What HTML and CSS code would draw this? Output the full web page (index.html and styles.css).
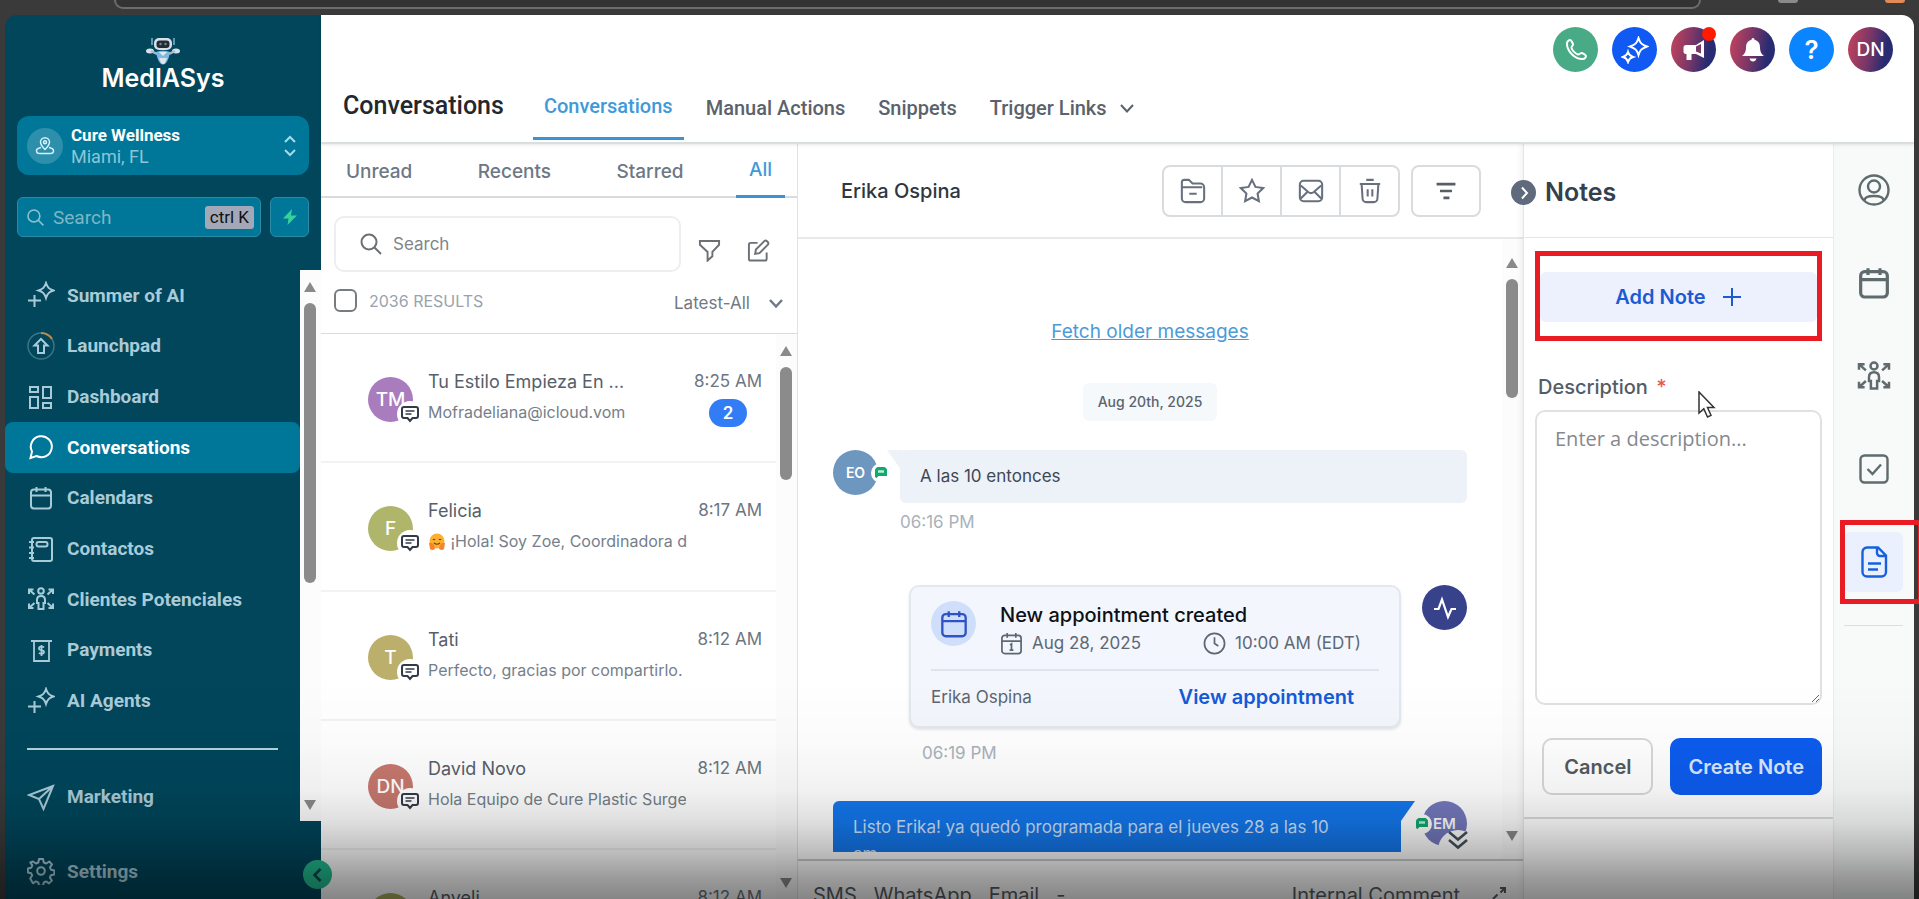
FILE: index.html
```html
<!DOCTYPE html>
<html lang="en">
<head>
<meta charset="utf-8">
<meta name="viewport" content="width=device-width, initial-scale=1">
<title>Conversations</title>
<link rel="stylesheet" href="styles.css">
</head>
<body>
<svg class="defs" aria-hidden="true">
  <symbol id="i-search" viewBox="0 0 24 24"><circle cx="10" cy="10" r="7.5"/><path d="M15.5 15.5 22 22"/></symbol>
  <symbol id="i-sparkle" viewBox="0 0 28 28"><path d="M19 2c1.500 4.500 3 6 7.500 7.500-4.500 1.500-6 3-7.500 7.500-1.500-4.500-3-6-7.500-7.500C16 8 17.500 6.500 19 2zM7.500 14v12M1 19.500h13"/></symbol>
  <symbol id="i-calendar" viewBox="0 0 24 24"><rect x="2" y="3.500" width="20" height="19" rx="3"/><path d="M2 9.500h20M7.500 1v5M16.500 1v5"/></symbol>
  <symbol id="i-people" viewBox="0 0 28 24"><circle cx="14" cy="4" r="2.800"/><path d="M14 9c-3 0-4 1.500-4 4v3h1.500v6h5v-6H18v-3c0-2.500-1-4-4-4zM2 7V2.500h4.500M2 2.500l5.500 5M26 7V2.500h-4.500M26 2.500l-5.500 5M2 16.500V21h4.500M2 21l5.500-5M26 16.500V21h-4.500M26 21l-5.500-5"/></symbol>
  <symbol id="i-down" viewBox="0 0 16 16"><path d="M2 5l6 6.500L14 5"/></symbol>
  <symbol id="i-sms" viewBox="0 0 20 18"><path d="M4 2h12a2 2 0 0 1 2 2v7a2 2 0 0 1-2 2h-3.500L10 16l-2.500-3H4a2 2 0 0 1-2-2V4a2 2 0 0 1 2-2z"/><path d="M5.500 6h9M5.500 9h6" stroke-width="1.500"/></symbol>
  <symbol id="i-chat" viewBox="0 0 14 14"><path d="M1 1h12v9H4.500L1 13.500z" fill="#13a870"/><path d="M4 4.200h6v2.600H4z" fill="#b9f0d6"/></symbol>
</svg>

<div class="browser-bar"><span class="omnibox"></span><i class="bar-dot"></i><i class="bar-dot bar-dot-orange"></i></div>

<div class="app">
  <aside class="sidebar">
    <div class="brand">
      <svg class="robot" viewBox="0 0 34 28" aria-hidden="true">
        <path d="M6 1v7M28 1v7" stroke="#7fb4d0" stroke-width="1.500"/>
        <ellipse cx="4" cy="14" rx="4" ry="2.500" fill="#d5e2ec"/><ellipse cx="30" cy="14" rx="4" ry="2.500" fill="#d5e2ec"/>
        <path d="M5 14l6 3M29 14l-6 3" stroke="#a9bccb" stroke-width="2.500"/>
        <rect x="8" y="1" width="18" height="12" rx="5" fill="#d7e0e8"/><rect x="10.500" y="3.500" width="13" height="7.500" rx="3" fill="#252b33"/>
        <circle cx="14.500" cy="7" r="1.200" fill="#77889a"/><circle cx="19.500" cy="7" r="1.200" fill="#77889a"/>
        <path d="M10 15q7-3 14 0-1 7-4 11-3 3-6 0-3-4-4-11z" fill="#7eb8e4"/><path d="M13 21h8l-2 5q-2 2-4 0z" fill="#dfe5ea"/><path d="M13 15l4 4 4-4z" fill="#d9edf9"/>
      </svg>
      <div class="brand-name">MedIASys</div>
    </div>

    <button class="account" type="button">
      <span class="account-pin"><svg viewBox="0 0 20 20"><path d="M10 13.500C7.500 11 5.500 8.800 5.500 6.300a4.500 4.500 0 0 1 9 0c0 2.500-2 4.700-4.500 7.200z"/><circle cx="10" cy="6.300" r="1.500"/><path d="M6 11.500c-3 .6-4.500 2-4.500 3.200C1.500 16.500 3 17.500 5 17.500h10c2 0 3.500-1 3.500-2.800 0-1.200-1.500-2.600-4.500-3.200"/></svg></span>
      <span class="account-text"><b>Cure Wellness</b><span>Miami, FL</span></span>
      <svg class="account-arrows" viewBox="0 0 14 22"><path d="M2 7l5-5 5 5M2 15l5 5 5-5"/></svg>
    </button>

    <div class="side-search">
      <label class="side-search-box">
        <svg viewBox="0 0 24 24"><use href="#i-search"/></svg>
        <input type="text" placeholder="Search" aria-label="Search menu">
        <kbd>ctrl K</kbd>
      </label>
      <button class="bolt" type="button" aria-label="Quick actions"><svg viewBox="0 0 16 18"><path d="M10 1 1 10.500h5.500L5.500 17 15 7.500H9z"/></svg></button>
    </div>

    <div class="side-scroll">
      <nav class="menu">
        <div class="menu-main">
          <a href="#"><svg viewBox="0 0 28 28"><use href="#i-sparkle"/></svg>Summer of AI</a>
          <a href="#"><svg viewBox="0 0 28 28"><circle cx="14" cy="14" r="13" stroke="#3d7485" stroke-width="1.500"/><path d="M14 1a13 13 0 0 1 11 6" stroke="#c08a4a"/><path d="M14 7l6.500 6.500H17V21h-6v-7.500H7.500z"/></svg>Launchpad</a>
          <a href="#"><svg viewBox="0 0 28 28"><path d="M3 4h8v5H3zM16 4h8v11h-8zM3 14h8v11H3zM16 20h8v5h-8z"/></svg>Dashboard</a>
          <a href="#" class="active"><svg viewBox="0 0 28 28"><path d="M3.500 25l1.500-6.500A10.500 10.500 0 1 1 9.500 23z"/></svg>Conversations</a>
          <a href="#"><svg class="small" viewBox="0 0 24 24"><use href="#i-calendar"/></svg>Calendars</a>
          <a href="#"><svg viewBox="0 0 28 28"><rect x="5" y="3" width="20" height="23" rx="2"/><rect x="9.500" y="7" width="11" height="4.500" rx="2"/><path d="M2 7h5M2 12.500h5M2 18h5M2 23h5"/></svg>Contactos</a>
          <a href="#"><svg viewBox="0 0 28 24"><use href="#i-people"/></svg>Clientes Potenciales</a>
          <a href="#"><svg viewBox="0 0 28 28"><path d="M4 5h21M7 5v20h15V5M17 11.500c-1-1.200-5-1.300-5 .9 0 2.400 5 1.200 5 3.600 0 2.200-4 2.200-5 .8M14.500 9v11" stroke-width="1.800"/></svg>Payments</a>
          <a href="#"><svg viewBox="0 0 28 28"><use href="#i-sparkle"/></svg>AI Agents</a>
        </div>
        <hr>
        <a href="#"><svg viewBox="0 0 28 28"><path d="M26 3 2 12l10 4 4.500 10zM12 16 26 3"/></svg>Marketing</a>
      </nav>
      <div class="scrollbar"><i class="up"></i><i class="thumb thumb-side"></i><i class="down"></i></div>
    </div>
    <div class="side-foot">
      <a href="#"><svg viewBox="0 0 28 28"><circle cx="14" cy="14" r="3.800"/><path d="M12 2h4l.8 3.500 2.400 1 3-2 2.800 2.900-2 3 1 2.300 3.400.8v4l-3.500.7-1 2.400 2 3-2.900 2.800-3-2-2.200 1-.8 3.400h-4l-.7-3.500-2.400-1-3 2L3.200 21.500l2-3-1-2.200-3.300-.8v-4l3.400-.8 1-2.300-2-3L6 4.500l3 2 2.300-1z" stroke-linejoin="round"/></svg>Settings</a>
    </div>
    <button class="collapse" type="button" aria-label="Collapse menu"><svg viewBox="0 0 16 16"><path d="M10.500 2 4.500 8l6 6"/></svg></button>
  </aside>

  <div class="workspace">
    <header class="top">
      <div class="top-icons">
        <button class="round green" type="button" aria-label="Phone"><svg viewBox="0 0 24 24"><path d="M3 5c0-1.500 2-3 3-3 1.200 0 3 3.500 3 4.500S7 9 7.500 10c1 2.500 4 5.500 6.500 6.500 1 .4 2.500-1.500 3.500-1.500s4.500 1.800 4.500 3-1.500 3-3 3C11 21.500 2.500 13 3 5z"/></svg></button>
        <button class="round blue" type="button" aria-label="AI"><svg class="wide" viewBox="0 0 28 28"><path d="M17.500 2c1.500 5 3 6.500 8.500 8.500-5.500 2-7 3.500-8.500 8.500-1.500-5-3-6.500-8.500-8.500C14.500 8.500 16 7 17.500 2zM7 16c.9 3 1.800 4 5 5-3.200 1-4.100 2-5 5-.9-3-1.800-4-5-5 3.200-1 4.100-2 5-5z"/></svg></button>
        <button class="round mix" type="button" aria-label="Announcements"><svg viewBox="0 0 24 24"><path d="M22 2v18l-8-4H9.500v6h-5v-6H4a2.500 2.500 0 0 1-2.500-2.500v-4A2.500 2.500 0 0 1 4 7h10z" fill="#fff" stroke="none"/><path d="M19 6v9.500l-5-2V8.500z" fill="#7a3a66" stroke="none"/></svg><i class="dot"></i></button>
        <button class="round mix" type="button" aria-label="Notifications"><svg viewBox="0 0 24 24"><path d="M12 0c1 0 1.500.8 1.500 1.700C17 2.500 19 5 19 9c0 5 1.500 7 4 9H1c2.500-2 4-4 4-9 0-4 2-6.500 5.500-7.300C10.500.8 11 0 12 0zM8.500 20.500h7c-.5 2-1.800 3-3.500 3s-3-1-3.500-3z" fill="#fff" stroke="none"/></svg></button>
        <button class="round sky" type="button">?</button>
        <button class="round mix initials" type="button">DN</button>
      </div>
      <div class="top-nav">
        <h1>Conversations</h1>
        <nav class="tabs">
          <a href="#" class="on">Conversations</a>
          <a href="#">Manual Actions</a>
          <a href="#">Snippets</a>
          <a href="#">Trigger Links <svg viewBox="0 0 16 16"><use href="#i-down"/></svg></a>
        </nav>
      </div>
    </header>

    <div class="columns">
      <section class="inbox">
        <nav class="inbox-tabs"><a href="#">Unread</a><a href="#">Recents</a><a href="#">Starred</a><a href="#" class="on">All</a></nav>
        <div class="inbox-tools">
          <label class="inbox-search"><svg viewBox="0 0 24 24"><use href="#i-search"/></svg><input type="text" placeholder="Search" aria-label="Search conversations"></label>
          <button type="button" aria-label="Filter"><svg viewBox="0 0 24 24"><path d="M2 2h20v4l-7 7.500V18l-5 4.500v-9L2 6z"/></svg></button>
          <button type="button" aria-label="Compose"><svg viewBox="0 0 24 24"><path d="M11 4H4a2 2 0 0 0-2 2v14.500a2 2 0 0 0 2 2h14.500a2 2 0 0 0 2-2V14M8.500 15.500l.8-4.500 9-9c1.500-1.200 5 1.800 3.700 3.700l-9 9z"/></svg></button>
        </div>
        <div class="inbox-sort">
          <label><input type="checkbox">2036 RESULTS</label>
          <span class="sort"><select aria-label="Sort"><option>Latest-All</option></select><svg viewBox="0 0 16 16"><use href="#i-down"/></svg></span>
        </div>
        <div class="inbox-scroll">
          <ul class="threads">
            <li><span class="avatar violet">TM<i><svg viewBox="0 0 20 18"><use href="#i-sms"/></svg></i></span><div class="who"><b>Tu Estilo Empieza En ...</b><p>Mofradeliana@icloud.vom</p></div><div class="when">8:25 AM<span class="count">2</span></div></li>
            <li><span class="avatar olive">F<i><svg viewBox="0 0 20 18"><use href="#i-sms"/></svg></i></span><div class="who"><b>Felicia</b><p><svg class="hug" viewBox="0 0 18 18" role="img" aria-label="hugging face"><circle cx="9" cy="8" r="7.500" fill="#fbb12f"/><path d="M5 7q1-1.500 2 0M11 7q1-1.500 2 0M6 10q3 2.500 6 0" fill="none" stroke="#7a3c12" stroke-width="1.200"/><path d="M1 10q3-1 5 2l1 4q-3 2-5 0zM17 10q-3-1-5 2l-1 4q3 2 5 0z" fill="#f5842a"/></svg> ¡Hola! Soy Zoe, Coordinadora d</p></div><div class="when">8:17 AM</div></li>
            <li><span class="avatar sand">T<i><svg viewBox="0 0 20 18"><use href="#i-sms"/></svg></i></span><div class="who"><b>Tati</b><p>Perfecto, gracias por compartirlo.</p></div><div class="when">8:12 AM</div></li>
            <li><span class="avatar rose">DN<i><svg viewBox="0 0 20 18"><use href="#i-sms"/></svg></i></span><div class="who"><b>David Novo</b><p>Hola Equipo de Cure Plastic Surge</p></div><div class="when">8:12 AM</div></li>
            <li><span class="avatar moss">A</span><div class="who"><b>Anyeli</b></div><div class="when">8:12 AM</div></li>
          </ul>
          <div class="scrollbar"><i class="up"></i><i class="thumb thumb-inbox"></i><i class="down"></i></div>
        </div>
      </section>

      <main class="chat">
        <div class="chat-head">
          <h2>Erika Ospina</h2>
          <div class="group">
            <button type="button" aria-label="Archive"><svg viewBox="0 0 28 28"><path d="M2 9V4.500A2.500 2.500 0 0 1 4.500 2h5l4 4H22a4 4 0 0 1 4 4v12a4 4 0 0 1-4 4H6a4 4 0 0 1-4-4zM2 10h22M10 17h8"/></svg></button>
            <button type="button" aria-label="Star"><svg viewBox="0 0 28 28"><path d="M14 2l3.700 7.600 8.300 1.200-6 5.900 1.400 8.300-7.400-4-7.400 4L8 16.700l-6-5.900 8.300-1.200z"/></svg></button>
            <button type="button" aria-label="Mark unread"><svg viewBox="0 0 28 28"><rect x="2" y="3" width="24" height="22" rx="4"/><path d="M3 8l8 7q3 2.500 6 0l8-7M3 22l7-7M25 22l-7-7"/></svg></button>
            <button type="button" aria-label="Delete"><svg viewBox="0 0 28 28"><path d="M3 6.500h22M10 2h8M5 7l1 15a4 4 0 0 0 4 4h8a4 4 0 0 0 4-4l1-15M11.500 12v8M16.500 12v8"/></svg></button>
          </div>
          <button class="lines" type="button" aria-label="Filter messages"><svg viewBox="0 0 28 28"><path d="M3 6h22M7 14h14M11 22h7"/></svg></button>
        </div>
        <div class="chat-scroll">
          <div class="messages">
            <a class="older" href="#">Fetch older messages</a>
            <span class="day">Aug 20th, 2025</span>
            <div class="msg in">
              <span class="face steel">EO<svg class="chan" viewBox="0 0 14 14"><use href="#i-chat"/></svg></span>
              <div class="bubble">A las 10 entonces</div>
            </div>
            <time class="stamp">06:16 PM</time>
            <div class="event">
              <article class="appt">
                <div class="appt-top">
                  <span class="appt-icon"><svg viewBox="0 0 24 24"><use href="#i-calendar"/></svg></span>
                  <div class="appt-info">
                    <h3>New appointment created</h3>
                    <div class="appt-meta">
                      <span><svg viewBox="0 0 24 24"><use href="#i-calendar"/><path d="M10.500 13.500l1.500-1v6.500M10 19h4" stroke-width="1.800"/></svg>Aug 28, 2025</span>
                      <span><svg viewBox="0 0 24 24"><circle cx="12" cy="12" r="10.500"/><path d="M12 5.500V12l4 2.500"/></svg>10:00 AM (EDT)</span>
                    </div>
                  </div>
                </div>
                <div class="appt-foot"><span>Erika Ospina</span><a href="#">View appointment</a></div>
              </article>
              <span class="pulse"><svg viewBox="0 0 24 24"><path d="M1 13h4.500L9 3.500 15 21l3.500-8H23"/></svg></span>
            </div>
            <time class="stamp stamp-event">06:19 PM</time>
            <div class="msg out">
              <div class="bubble">Listo Erika! ya quedó programada para el jueves 28 a las 10 am</div>
              <span class="face indigo"><button class="jump" type="button" aria-label="Jump to latest"><svg viewBox="0 0 20 20"><path d="M1 2l9 7.500L19 2M1 10l9 7.500L19 10"/></svg></button><span class="face-name">EM</span><svg class="chan" viewBox="0 0 14 14"><use href="#i-chat"/></svg></span>
            </div>
          </div>
          <div class="scrollbar"><i class="up"></i><i class="thumb thumb-chat"></i><i class="down"></i></div>
        </div>
        <div class="composer"><a href="#">SMS</a><a href="#">WhatsApp</a><a href="#">Email</a><span>-</span><a href="#" class="internal">Internal Comment</a><svg viewBox="0 0 14 14"><path d="M8 2h5v5M13 2 8.500 6.500M1 13l4.500-4.500"/></svg></div>
      </main>

      <section class="notes">
        <button class="fold" type="button" aria-label="Close notes"><svg viewBox="0 0 16 16"><path d="M6 2.500 11 8l-5 5.500"/></svg></button>
        <div class="notes-head"><h2>Notes</h2></div>
        <div class="notes-body">
          <div class="add-wrap"><button class="add" type="button">Add Note <svg viewBox="0 0 20 20"><path d="M10 1v18M1 10h18"/></svg></button></div>
          <label class="desc" for="desc">Description <em>*</em></label>
          <textarea id="desc" placeholder="Enter a description..."></textarea>
          <div class="actions"><button type="button">Cancel</button><button type="button" class="primary">Create Note</button></div>
          <svg class="pointer" viewBox="0 0 18 28"><path d="M1 1v21l4.800-4.300L9.500 26l3.500-1.700-3.500-7.800H16z"/></svg>
        </div>
      </section>

      <aside class="rail">
        <button type="button" aria-label="Contact"><svg viewBox="0 0 32 32"><circle cx="16" cy="16" r="14.500"/><circle cx="16" cy="12.500" r="6"/><path d="M6.500 26.500c0-3 4-4.500 9.500-4.500s9.500 1.500 9.500 4.500"/></svg></button>
        <button type="button" aria-label="Appointments"><svg viewBox="0 0 24 24"><use href="#i-calendar"/></svg></button>
        <button type="button" aria-label="Opportunities"><svg class="wide" viewBox="0 0 28 24"><use href="#i-people"/></svg></button>
        <button type="button" aria-label="Tasks"><svg viewBox="0 0 32 32"><rect x="2.500" y="2.500" width="27" height="27" rx="4"/><path d="M9.500 16l5 5 8.500-9.500"/></svg></button>
        <button type="button" aria-label="Notes" class="on"><svg viewBox="0 0 32 32"><path d="M9 1.500h11l8 8V26a4.500 4.500 0 0 1-4.500 4.500H9A4.500 4.500 0 0 1 4.500 26V6A4.500 4.500 0 0 1 9 1.500zM19 2v5a3 3 0 0 0 3 3h5.500M10 17.500h13M10 23.500h10"/></svg></button>
        <hr>
      </aside>
    </div>
  </div>
</div>
<div class="shade"></div>
</body>
</html>
```

FILE: styles.css
```css
* { box-sizing: border-box; }
body {
  margin: 0;
  height: 100vh;
  overflow: hidden;
  display: flex;
  flex-direction: column;
  background: #3a3a3b;
  font-family: Inter, "Liberation Sans", sans-serif;
  color: #5b6672;
}
button, input, textarea, select { font: inherit; color: inherit; margin: 0; }
button { border: 0; padding: 0; background: none; cursor: pointer; }
a { color: inherit; text-decoration: none; }
h1, h2, h3, p, ul { margin: 0; padding: 0; list-style: none; }
svg { fill: none; stroke: currentColor; stroke-width: 2; display: block; flex: none; }
.defs { position: absolute; width: 0; height: 0; }

.browser-bar { height: 15px; flex: none; display: flex; padding: 0 14px 0 114px; }
.omnibox { flex: 1; height: 9px; background: #333334; border: solid #6c6c6c; border-width: 0 2px 2px; border-radius: 0 0 18px 18px; }
.bar-dot { width: 20px; height: 3px; border-radius: 0 0 10px 10px; background: #8a8a8a; margin-left: 77px; }
.bar-dot-orange { background: #e08a55; margin-left: 87px; }

.app { flex: 1; min-height: 0; display: flex; margin: 0 5px; }

/* Sidebar */
.sidebar {
  position: relative;
  width: 316px;
  flex: none;
  display: flex;
  flex-direction: column;
  background: #01465b;
  border-radius: 12px 0 0 0;
  font-family: Roboto, "Liberation Sans", sans-serif;
}
.brand { height: 101px; padding-top: 22px; display: flex; flex-direction: column; align-items: center; }
.robot { width: 34px; height: 28px; stroke: none; }
.brand-name { font: 600 25px/26px Inter, sans-serif; color: #fff; }
.account {
  margin: 0 12px;
  height: 59px;
  display: flex;
  align-items: center;
  padding: 0 12px 0 10px;
  border-radius: 12px;
  background: #007799;
  text-align: left;
}
.account-pin { width: 36px; height: 36px; border-radius: 50%; background: #2e8fac; display: grid; place-items: center; color: #d5f3fa; }
.account-pin svg { width: 20px; height: 20px; stroke-width: 1.5; }
.account-text { flex: 1; margin-left: 8px; font-size: 18px; line-height: 21px; color: #8cc6d6; display: flex; flex-direction: column; }
.account-text b { color: #fff; font-size: 17px; font-weight: 700; }
.account-arrows { width: 14px; height: 22px; color: #a4dbe6; }
.side-search { display: flex; gap: 9px; margin: 22px 12px 0; }
.side-search-box, .bolt { height: 40px; background: #007799; border: 1px solid #2b8ba5; border-radius: 6px; }
.side-search-box { flex: 1; min-width: 0; display: flex; align-items: center; padding: 0 6px 0 8px; color: #8dc0cd; }
.side-search-box svg { width: 19px; height: 19px; }
.side-search-box input { flex: 1; min-width: 0; border: 0; background: none; padding: 0 8px; font-size: 19px; outline: 0; }
.side-search-box input::placeholder { color: #7eb6c5; }
.side-search-box kbd { font: 17px/23px Roboto, sans-serif; padding: 0 5px; border-radius: 3px; background: #a3a8b8; color: #111; }
.bolt { width: 39px; display: grid; place-items: center; }
.bolt svg { width: 16px; height: 18px; fill: #34d399; stroke: none; }
.side-scroll { flex: 1; min-height: 0; margin-top: 33px; display: flex; }
.menu { flex: 1; color: #a9cbd8; }
.menu-main { display: grid; grid-auto-rows: 1fr; height: 456px; }
.menu a, .side-foot a { display: flex; align-items: center; gap: 12px; padding-left: 22px; font-size: 19px; font-weight: 700; }
.menu svg, .side-foot svg { width: 28px; height: 28px; }
.menu svg.small { width: 24px; height: 24px; margin: 0 2px; }
.menu a.active { background: #007799; color: #fff; border-radius: 8px; }
.menu hr { height: 2px; margin: 22px 22px 21px; border: 0; background: #b3d3dd; }
.menu > a { height: 51px; }
.side-foot { height: 78px; padding-top: 36px; color: #a9cbd8; }
.collapse { position: absolute; right: -11px; bottom: 10px; width: 29px; height: 29px; border-radius: 50%; background: #22bd92; color: #0b4a4a; display: grid; place-items: center; z-index: 3; }
.collapse svg { width: 16px; height: 16px; stroke-width: 2.5; }

.scrollbar { width: 21px; flex: none; background: #fcfcfc; display: flex; flex-direction: column; align-items: center; padding: 12px 5px 11px 4px; }
.up, .down { border: 6px solid transparent; }
.up { border-top: 0; border-bottom: 10px solid #8a8a8a; }
.down { border-bottom: 0; border-top: 10px solid #8a8a8a; margin-top: auto; }
.thumb { width: 12px; border-radius: 6px; background: #8b8b8b; margin-top: 11px; }
.thumb-side { height: 280px; }
.thumb-inbox { height: 113px; }
.thumb-chat { height: 119px; }

/* Header */
.workspace { flex: 1; min-width: 0; display: flex; flex-direction: column; background: #fff; border-radius: 0 12px 0 0; }
.top {
  height: 129px;
  flex: none;
  display: flex;
  flex-direction: column;
  justify-content: space-between;
  border-bottom: 2px solid #d9dfe1;
  box-shadow: 0 1px 3px #0000001a;
  font-family: Roboto, "Liberation Sans", sans-serif;
  z-index: 1;
}
.top-icons { display: flex; justify-content: flex-end; gap: 14px; padding: 12px 21px 0 0; }
.round { position: relative; width: 45px; height: 45px; border-radius: 50%; color: #fff; display: grid; place-items: center; font: 600 26px Inter, sans-serif; }
.round svg { width: 24px; height: 24px; }
.round svg.wide { width: 28px; height: 28px; }
.green { background: #48ab86; }
.blue { background: #1059f2; }
.sky { background: #0b84ff; }
.mix { background: linear-gradient(100deg, #b8405f 10%, #7a3767 45%, #272b72 80%); }
.initials { font-size: 19px; font-weight: 500; }
.dot { position: absolute; right: 0; top: 0; width: 14px; height: 14px; border-radius: 50%; background: #ff1a00; }
.top-nav { display: flex; align-items: center; }
h1 { margin: 0 29px 6px 22px; font-size: 25px; font-weight: 500; line-height: 30px; color: #23272e; }
.tabs { display: flex; gap: 33px; font-size: 20px; font-weight: 500; color: #5b626b; }
.tabs a { display: flex; align-items: center; gap: 12px; height: 65px; }
.tabs a.on { color: #3f9ad9; padding: 0 11px; border-bottom: 3px solid #3a93d2; margin: 0 -11px 2px 0; }
.tabs svg { width: 16px; height: 16px; }

.columns { flex: 1; min-height: 0; display: flex; }

/* Inbox */
.inbox { width: 477px; flex: none; display: flex; flex-direction: column; border-right: 1px solid #dfe3e8; }
.inbox-tabs { height: 54px; flex: none; display: flex; justify-content: space-between; padding: 0 12px; border-bottom: 2px solid #d8dcdf; font-size: 19px; font-weight: 500; color: #6d7885; }
.inbox-tabs a { display: flex; align-items: center; padding: 0 13px; margin-bottom: -2px; }
.inbox-tabs a.on { color: #3f9ad9; border-bottom: 3px solid #3a93d2; }
.inbox-tools { display: flex; align-items: center; gap: 26px; padding: 18px 27px 0 13px; }
.inbox-search { flex: 1; min-width: 0; height: 56px; display: flex; align-items: center; gap: 10px; padding: 0 23px; margin-right: -9px; border: 2px solid #eceef0; border-radius: 10px; color: #6b7075; }
.inbox-search svg { width: 24px; height: 24px; }
.inbox-search input { flex: 1; min-width: 0; border: 0; padding: 0; outline: 0; background: none; font-size: 17px; }
.inbox-search input::placeholder { color: #80858a; }
.inbox-tools button { padding-top: 12px; color: #6b7075; }
.inbox-tools button svg { width: 23px; height: 23px; }
.inbox-sort { display: flex; align-items: center; justify-content: space-between; height: 62px; flex: none; padding: 0 13px; border-bottom: 1px solid #d9dde0; font-size: 16px; color: #9aa3ad; }
.inbox-sort label { display: flex; align-items: center; gap: 12px; margin-bottom: 4px; }
.inbox-sort input { appearance: none; width: 23px; height: 23px; border: 2px solid #777c81; border-radius: 6px; }
.sort { display: flex; align-items: center; gap: 18px; font-size: 17px; color: #717a83; }
.sort select { appearance: none; border: 0; background: none; padding: 0; }
.sort svg { width: 16px; height: 16px; stroke-width: 2.5; }
.inbox-scroll { flex: 1; min-height: 0; display: flex; }
.threads { flex: 1; min-width: 0; overflow: hidden; }
.threads li { display: flex; height: 129px; padding: 33px 14px 0 47px; border-bottom: 2px solid #f1f3f4; }
.avatar { position: relative; width: 45px; height: 45px; margin-top: 10px; flex: none; border-radius: 50%; display: grid; place-items: center; color: #fff; font-size: 19px; font-weight: 500; }
.avatar i { position: absolute; left: 29px; top: 24px; width: 26px; height: 26px; border-radius: 50%; background: #fff; color: #343b48; display: grid; place-items: center; }
.avatar i svg { width: 20px; height: 18px; }
.violet { background: #a97cbd; }
.olive { background: #b0b56c; }
.sand { background: #bcae6b; }
.rose { background: #c6786e; }
.moss { background: #a9ae5c; }
.who { flex: 1; min-width: 0; margin: 2px 11px 0 15px; }
.who b { display: block; font-size: 18px; line-height: 26px; font-weight: 400; color: #56606b; white-space: nowrap; }
.who p { margin-top: 5px; font-size: 16px; line-height: 24px; white-space: nowrap; overflow: hidden; color: #75808a; }
.hug { display: inline-block; width: 18px; height: 18px; vertical-align: -4px; stroke: none; }
.when { font-size: 17px; line-height: 26px; padding-top: 1px; color: #6b7681; display: flex; flex-direction: column; align-items: center; }
.count { margin-top: 5px; width: 38px; height: 28px; border-radius: 14px; background: #327df6; color: #fff; font-weight: 600; text-align: center; line-height: 28px; }

/* Chat */
.chat { flex: 1; min-width: 0; display: flex; flex-direction: column; }
.chat-head { height: 95px; flex: none; display: flex; align-items: center; padding: 0 42px 0 43px; border-bottom: 2px solid #e6eaec; }
.chat-head h2 { flex: 1; font-size: 20px; font-weight: 500; color: #30363e; }
.group { display: flex; margin-right: 11px; border: 2px solid #d9dcdf; border-radius: 8px; }
.group button { width: 59px; height: 48px; display: grid; place-items: center; color: #68707f; border-left: 2px solid #d9dcdf; }
.group button:first-child { border-left: 0; width: 57px; }
.group svg { width: 26px; height: 26px; stroke-width: 2.2; }
.lines { width: 70px; height: 52px; border: 2px solid #d9dcdf; border-radius: 8px; display: grid; place-items: center; color: #565e6a; }
.lines svg { width: 28px; height: 24px; stroke-width: 3; }
.chat-scroll { flex: 1; min-height: 0; display: flex; }
.chat-scroll .scrollbar { padding-top: 19px; padding-bottom: 18px; }
.messages { flex: 1; min-width: 0; overflow: hidden; margin-bottom: 7px; padding: 80px 35px 0 35px; display: flex; flex-direction: column; align-items: center; }
.older { font-size: 19px; line-height: 26px; color: #4b9bd8; text-decoration: underline; }
.day { margin-top: 38px; padding: 0 15px; border-radius: 6px; background: #f5f9fb; font-size: 14px; font-weight: 500; line-height: 38px; color: #5b646d; }
.msg { display: flex; align-self: stretch; margin-top: 29px; }
.bubble { position: relative; flex: 1; min-width: 0; padding: 13px 20px; font-size: 17px; line-height: 27px; border-radius: 6px; }
.in .bubble { margin-left: 22px; background: #edf1f8; color: #3e4854; }
.bubble::before { content: ""; position: absolute; top: 0; width: 16px; height: 20px; background: inherit; }
.in .bubble::before { left: -13px; clip-path: polygon(0 0, 100% 0, 100% 100%, 80% 90%); }
.out .bubble { margin-right: 21px; padding-right: 70px; background: #1478ee; color: #cfe4ff; border-radius: 6px 0 0 6px; }
.out .bubble::before { right: -14px; clip-path: polygon(0 0, 100% 0, 12% 100%, 0 100%); }
.face { position: relative; width: 45px; height: 45px; border-radius: 50%; flex: none; display: grid; place-items: center; color: #fff; font-size: 14px; font-weight: 600; }
.steel { background: #6e97c0; }
.indigo { background: #7479bd; font-size: 15px; }
.face-name { position: relative; }
.chan { position: absolute; top: 13px; width: 20px; height: 20px; padding: 3px; background: #fff; border-radius: 50%; stroke: none; }
.in .chan { left: 38px; }
.out .chan { left: -10px; }
.jump { position: absolute; left: 16px; top: 29px; width: 40px; height: 40px; border-radius: 50%; background: #fff; color: #46505c; display: grid; justify-items: center; align-items: start; }
.jump svg { width: 20px; height: 20px; stroke-width: 2.5; }
.stamp { align-self: flex-start; margin: 7px 0 0 67px; font-size: 17px; line-height: 24px; color: #a9b2ba; }
.event { align-self: stretch; display: flex; justify-content: flex-end; margin-top: 51px; }
.appt { width: 492px; height: 143px; padding: 14px 20px; margin-right: 21px; border: 2px solid #e3e7ef; border-radius: 10px; background: #f3f6fd; box-shadow: 0 2px 3px #0000001a; }
.appt-top { display: flex; gap: 24px; padding-bottom: 12px; border-bottom: 2px solid #dfe4ec; }
.appt-icon { width: 45px; height: 45px; flex: none; border-radius: 50%; background: #cfdffb; color: #3053c4; display: grid; place-items: center; }
.appt-icon svg { width: 28px; height: 28px; }
.appt-info { flex: 1; }
.appt h3 { font-size: 20px; font-weight: 500; line-height: 28px; color: #0d1015; }
.appt-meta { display: flex; justify-content: space-between; padding-right: 18px; font-size: 17px; line-height: 28px; color: #5d6874; }
.appt-meta span { display: flex; align-items: center; gap: 9px; }
.appt-meta svg { width: 23px; height: 23px; stroke-width: 1.8; }
.appt-foot { display: flex; justify-content: space-between; align-items: center; height: 52px; padding-right: 25px; font-size: 17px; }
.appt-foot a { font-size: 20px; font-weight: 600; color: #155bd8; }
.pulse { width: 45px; height: 45px; border-radius: 50%; background: #37428a; color: #fff; display: grid; place-items: center; }
.pulse svg { width: 24px; height: 24px; stroke-width: 2.2; }
.stamp-event { margin: 13px 0 0 89px; }
.out { margin-top: 36px; }
.composer { height: 40px; flex: none; display: flex; gap: 17px; padding: 21px 17px 0 15px; border-top: 2px solid #c9cdd1; font-size: 20px; line-height: 26px; color: #555d66; overflow: hidden; }
.internal { margin-left: auto; }
.composer svg { width: 14px; height: 14px; margin: 4px 0 0 15px; }

/* Notes */
.notes { position: relative; width: 310px; flex: none; border-left: 1px solid #e3e6e9; box-shadow: -2px 0 6px #0000000f; }
.fold { position: absolute; left: -13px; top: 36px; width: 25px; height: 25px; border-radius: 50%; background: #5f6a7d; color: #fff; display: grid; place-items: center; }
.fold svg { width: 16px; height: 16px; }
.notes-head { height: 94px; display: flex; align-items: center; padding: 2px 0 0 21px; border-bottom: 1px solid #e3e6e9; }
.notes-head h2 { font-size: 25px; font-weight: 600; color: #36404c; }
.notes-body { position: relative; padding: 13px 11px 22px; border-bottom: 2px solid #d9dcde; }
.add-wrap { padding: 16px 0 14px; border: 5px solid #e91c24; }
.add { width: 100%; height: 50px; display: flex; align-items: center; justify-content: center; gap: 16px; border-radius: 6px; background: #ecf1fd; color: #1a5bd3; font-size: 20px; font-weight: 600; }
.add svg { width: 20px; height: 20px; }
.desc { display: block; margin: 33px 0 0 3px; font-size: 20px; line-height: 26px; font-weight: 500; color: #545c66; }
.desc em { margin-left: 3px; color: #e8594c; font-style: normal; }
textarea { display: block; width: 100%; height: 295px; margin-top: 10px; padding: 13px 18px; border: 2px solid #dfe1e4; border-radius: 10px; background: #fff; font: 20px/28px "Open Sans", "Noto Sans", sans-serif; outline: 0; }
textarea::placeholder { color: #85898f; }
.actions { display: flex; justify-content: flex-end; gap: 17px; margin-top: 33px; font-size: 20px; font-weight: 600; }
.actions button { height: 57px; padding: 0 20px; border: 2px solid #d6d8db; border-radius: 10px; color: #555a60; }
.actions .primary { padding: 0 16px; background: #0d5cee; border-color: #0d5cee; color: #d8e8ff; }
.pointer { position: absolute; left: 174px; top: 153px; width: 18px; height: 28px; fill: #fff; stroke: #333; stroke-width: 1.5; }

/* Right rail */
.rail { width: 81px; flex: none; padding: 16px 11px 0 10px; background: #f8faf9; border-left: 1px solid #eef0f0; display: flex; flex-direction: column; gap: 33px; }
.rail button { position: relative; height: 60px; display: grid; place-items: center; color: #5f6b6d; border-radius: 6px; }
.rail svg { width: 32px; height: 32px; stroke-width: 2.4; }
.rail svg.wide { width: 36px; height: 30px; stroke-width: 2; }
.rail .on { background: #eaf0fd; color: #1660e0; }
.rail .on::after { content: ""; position: absolute; inset: -12px -20px -12px -4px; border: 5px solid #e91c24; }
.rail hr { width: 100%; height: 1px; margin: 0; border: 0; background: #dcdfe1; }

.shade {
  position: fixed;
  inset: auto 0 0 0;
  height: 220px;
  pointer-events: none;
  z-index: 5;
  background: linear-gradient(#0000 0%, #00000004 28%, #0000000d 50%, #0000001f 64%, #00000040 78%, #00000066 91%, #0000007a 100%);
}
```
